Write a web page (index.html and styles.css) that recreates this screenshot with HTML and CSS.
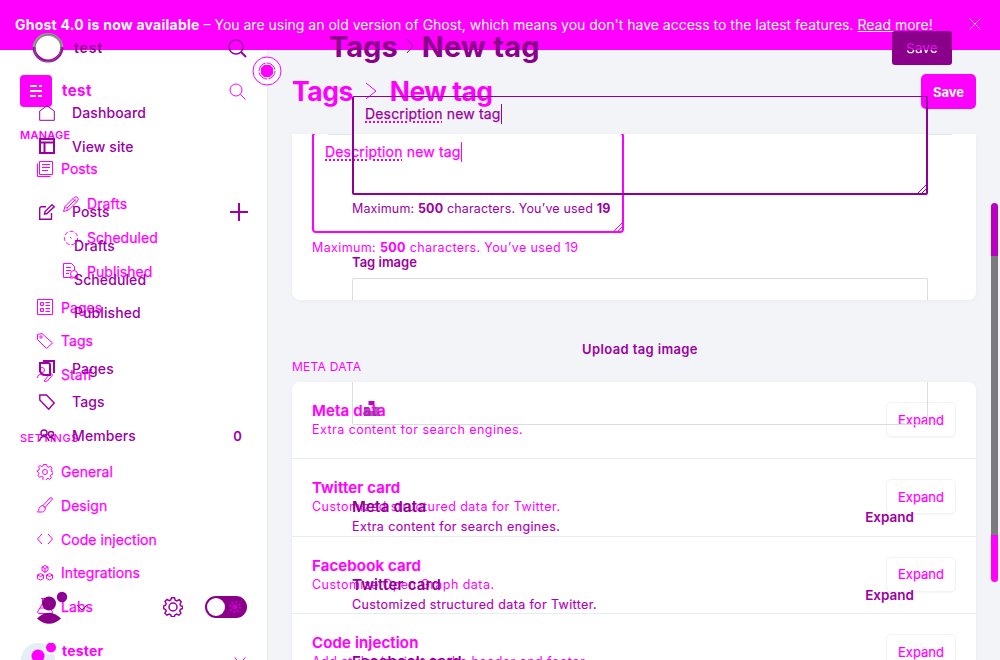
FILE: index.html
```html
<!DOCTYPE html>
<html lang="en">
<head>
<meta charset="utf-8">
<title>New tag</title>
<link rel="stylesheet" href="styles.css">
</head>
<body>
<div class="screen">
<header class="banner"><p><b>Ghost 4.0 is now available</b> <span>– You are using an old version of Ghost, which means you don't have access to the latest features.</span> <a>Read more!</a></p>
<svg width="12" height="12" viewBox="0 0 12 12"><path d="M.5.5l11 11M11.5.5l-11 11" stroke="#fff" stroke-dasharray="2 1"/></svg></header>

<div class="layer current">
<nav class="side">
  <div class="brand"><svg class="logo" width="32" height="32" viewBox="0 0 32 32"><rect width="32" height="32" rx="4" fill="#f0f"/><path d="M10 11h7M19 11h3M10 16h12M10 21h6M18 21h4" stroke="#fff" stroke-width="2"/></svg><b>test</b>
  <svg class="i search" width="17" height="17" viewBox="0 0 17 17"><circle cx="7" cy="7" r="6"/><path d="M11.5 11.5l5 5"/></svg></div>
  <h4 class="manage">MANAGE</h4>
  <ul>
    <li><svg class="i" width="16" height="16" viewBox="0 0 16 16"><path d="M2.5.5h13v13h-13zM.5 2.500v13h13M5 3.500h8M5 6.500h8M5 9.500h6"/></svg>Posts</li>
  </ul>
  <ul class="sub">
    <li><svg class="i" width="16" height="16" viewBox="0 0 16 16"><path d="M.5 15.500l1.500-5 9-9q2-1.500 3.500 0t0 3.500l-9 9zM2 10.500l3.500 3.500M4 12l8.500-8.500M10 2.500l3.500 3.500"/></svg>Drafts</li>
    <li><svg class="i" width="16" height="16" viewBox="0 0 16 16"><circle cx="8" cy="8" r="6.700" stroke-dasharray="4 2"/><path d="M7 7l1.500 1.500"/></svg>Scheduled</li>
    <li><svg class="i" width="16" height="16" viewBox="0 0 16 16"><path d="M7 14.500H.5V.5h8l3 3V7M3 4.500h5M3 7.500h5M3 10.500h3"/><circle cx="11" cy="11" r="3.500"/><path d="M8 13l-1 2h3M14 13l1 2h-4"/></svg>Published</li>
  </ul>
  <ul class="group">
    <li><svg class="i" width="16" height="16" viewBox="0 0 16 16"><path d="M.5.5h15v15H.5zM3.500 3.500h3v3h-3zM3.500 9.500h3v3h-3zM8.500 3.500H13M8.500 6.500H13M8.500 9.500H13M8.500 12.500H13"/></svg>Pages</li>
    <li><svg class="i" width="16" height="16" viewBox="0 0 16 16"><path d="M.5 1.500L5 .5l10.500 9.500-6 5.500L.5 6.500z"/><circle cx="4" cy="4" r="1.200"/></svg>Tags</li>
    <li><svg class="i" width="16" height="16" viewBox="0 0 16 16"><circle cx="5" cy="4" r="2.500"/><path d="M.5 12q0-4 5-4 3 0 3.500 2M7 15l6-7q2-1 2.500 1l-5 6-3 .5z"/></svg>Staff</li>
  </ul>
  <h4 class="settings">SETTINGS</h4>
  <ul>
    <li><svg class="i" width="16" height="16" viewBox="0 0 16 16"><path d="M6.500.5h3l.5 2 1.500.700 2-1 1.500 2-1 1.800.500 1.500 1.500.500v2l-2 .500-.500 1.500 1 1.800-2 1.500-1.500-1-1.500.700-.5 1.500h-3L6 13l-1.500-.700-2 1-1.500-2 1-1.800L1.500 8.500.5 8V6.500l1.500-.500L2.500 4.500l-1-1.800 1.500-1.200 1.500 1L6 2z"/><circle cx="8" cy="8" r="2.500"/></svg>General</li>
    <li><svg class="i" width="16" height="16" viewBox="0 0 16 16"><path d="M6 8.500L13 1q2-1 2.500 1L8 10.500zM6 8.500l2.500 2.500q0 3-3 4H.5q1.500-1 1.500-3.500 1-3 4-3z"/></svg>Design</li>
    <li><svg class="i" width="16" height="16" viewBox="0 0 16 16"><path d="M5 3L.5 8 5 13M11 3l4.500 5L11 13"/></svg>Code injection</li>
    <li><svg class="i" width="16" height="16" viewBox="0 0 16 16"><path d="M8 .5l3 1.500v3.500L8 7 5 5.500V2zM3.500 8.500l3 1.500v3.500l-3 1.500-3-1.500V10zM12.500 8.500l3 1.500v3.500l-3 1.500-3-1.500V10zM5 2l3 1.500L11 2M.5 10l3 1.500 3-1.500M9.500 10l3 1.500 3-1.500M8 3.500V8"/></svg>Integrations</li>
    <li><svg class="i" width="16" height="16" viewBox="0 0 16 16"><path d="M4 .5h7M5.500.5v5L.5 14l1 1.500h13l1-1.500-5-8.500v-5M3 10h10"/></svg>Labs</li>
  </ul>
  <div class="user"><svg width="38" height="38" viewBox="0 0 38 38"><circle cx="17" cy="17" r="17" fill="#e5eef5"/><circle cx="17" cy="13" r="6.500" fill="#f0f"/><circle cx="30" cy="4.500" r="7" fill="#fff"/><circle cx="30" cy="4.500" r="5" fill="#f0f"/></svg><b>tester</b><svg class="i chev" width="12" height="7" viewBox="0 0 12 7"><path d="M.5.5L6 6 11.500.5"/></svg></div>
</nav>
<main class="main">
  <div class="head"><h1>Tags <svg class="i" width="12" height="18" viewBox="0 0 12 18"><path d="M1 1l10 8-10 8"/></svg> <span>New tag</span></h1><button class="save">Save</button></div>
  <section class="card form"><div class="area"><span class="typed"><u>Description</u> new tag</span><svg class="i grip" width="9" height="9" viewBox="0 0 9 9"><path d="M1 9l8-8M5 9l4-4"/></svg></div><p class="count">Maximum: <b>500</b> characters. You’ve used 19</p></section>
  <h4 class="meta">META DATA</h4>
  <section class="card list">
    <div class="row"><div><h3>Meta data</h3><p>Extra content for search engines.</p></div><button>Expand</button></div>
    <div class="row"><div><h3>Twitter card</h3><p>Customized structured data for Twitter.</p></div><button>Expand</button></div>
    <div class="row"><div><h3>Facebook card</h3><p>Customize Open Graph data.</p></div><button>Expand</button></div>
    <div class="row"><div><h3>Code injection</h3><p>Add styles/scripts to the header and footer.</p></div><button>Expand</button></div>
  </section>
</main>
</div>

<div class="layer previous">
<nav class="side">
  <div class="brand"><svg class="ring" width="32" height="32" viewBox="0 0 32 32" fill="none"><circle cx="16" cy="16" r="13" fill="#fff"/><path d="M2 17A14 14 0 0 1 30 16" stroke="#999" stroke-width="3"/><path d="M2 15A14 14 0 0 0 30 15" stroke="#a000a8" stroke-width="3"/><ellipse cx="16" cy="16" rx="13" ry="14" stroke="#777" stroke-width=".8" transform="rotate(35 16 16)"/></svg><b>test</b>
  <svg class="i search" width="19" height="19" viewBox="0 0 19 19"><circle cx="8" cy="8" r="7" stroke-width="1.500"/><path d="M13 13l5 5" stroke-width="2"/></svg></div>
  <ul class="top">
    <li><svg class="i" width="16" height="16" viewBox="0 0 16 16"><path d="M.7 15.300V6L8 .8 15.300 6v9.300z"/></svg>Dashboard</li>
    <li><svg class="i bold" width="16" height="16" viewBox="0 0 16 16"><path d="M1 1h14v14H1zM1 4.500h14M5.500 4.500V15"/></svg>View site</li>
  </ul>
  <ul class="posts">
    <li><svg class="i" width="16" height="16" viewBox="0 0 16 16"><path d="M7 2.700H2.500q-1.800 0-1.800 1.800v10.800h11.800V9M5.500 10l.5-2.500L13 .8l2.200 2L8 9.500z"/></svg>Posts<svg class="i plus" width="18" height="18" viewBox="0 0 18 18"><path d="M9 0v18M0 9h18"/></svg></li>
    <li class="in">Drafts</li><li class="in">Scheduled</li><li class="in">Published</li>
  </ul>
  <ul class="pages">
    <li><svg class="i bold" width="16" height="16" viewBox="0 0 16 16"><path d="M4 1h11v12M1 3h8q2 0 2 2v10H6q-4 0-5-4z"/></svg>Pages</li>
    <li><svg class="i" width="16" height="16" viewBox="0 0 16 16"><path d="M.8 1h6.700l7.700 8-5.500 6.200L.8 6z"/></svg>Tags</li>
    <li><svg class="i" width="16" height="16" viewBox="0 0 16 16"><circle cx="5" cy="5" r="3"/><circle cx="12" cy="6" r="2.500"/><path d="M.5 13q1-4.500 4.500-4.500T10 13M10 9.500q4-1 5.500 3.500"/></svg>Members<b class="zero">0</b></li>
  </ul>
  <div class="foot">
    <svg class="avatar" width="31" height="34" viewBox="0 0 31 34"><circle cx="12" cy="13.500" r="7" fill="#8b008b"/><path d="M0 28.500Q12 17 24 28.500 12 39 0 28.500z" fill="#8b008b"/><circle cx="25" cy="7" r="5.200" fill="#8f0098"/></svg>
    <svg class="i drop" width="12" height="7" viewBox="0 0 12 7"><path d="M1 1l5 5 5-5"/></svg>
    <svg class="i gear" width="20" height="20" viewBox="0 0 20 20"><path d="M8.500.8h3l.7 2.500 1.500.6 2.500-1.200 2 2-1.200 2.500.6 1.500 2 .8v2l-2.200.9-.6 1.500 1.100 2.300-2 2-2.300-1.200-1.500.7-.8 2h-2.800l-.8-2-1.500-.7-2.300 1.200-2-2L3.200 14l-.6-1.500-2-.8V9l2-.8.600-1.500L2 4.500l2-2 2.300 1.200 1.500-.7z"/><circle cx="10" cy="10" r="4"/></svg>
    <svg class="toggle" width="42" height="22" viewBox="0 0 42 22"><rect width="42" height="22" rx="11" fill="#8b008b"/><circle cx="11" cy="11" r="9" fill="#fff"/><g fill="none" stroke="#d000d8"><circle cx="30" cy="11" r="2" fill="#d000d8"/><circle cx="30" cy="11" r="5" stroke-width="2" stroke-dasharray="1.500 2.400"/></g></svg>
  </div>
</nav>
<main class="main">
  <div class="head"><h1>Tags <svg class="i" width="8" height="16" viewBox="0 0 8 16"><path d="M1 1l6 7-6 7"/></svg> <span>New tag</span></h1><button class="save"><span>Save</span></button></div>
  <div class="area"><span class="typed"><u>Description</u> new tag</span><svg class="i grip" width="9" height="9" viewBox="0 0 9 9"><path d="M1 9l8-8M5 9l4-4"/></svg></div>
  <p class="count">Maximum: <b>500</b> characters. You’ve used <b>19</b></p>
  <h5>Tag image</h5>
  <div class="boxtop"></div>
  <div class="upload">Upload tag image</div>
  <div class="boxend"><svg width="15" height="15" viewBox="0 0 15 15"><path d="M4.500 0h6v4h-6z" fill="#c000c8"/><path d="M0 6h4.500v4h6V6H15v9H0z" fill="#a020a8" opacity=".75"/></svg></div>
  <div class="row first"><div><h3>Meta data</h3><p>Extra content for search engines.</p></div><b>Expand</b></div>
  <div class="row"><div><h3>Twitter card</h3><p>Customized structured data for Twitter.</p></div><b>Expand</b></div>
  <div class="row"><div><h3>Facebook card</h3></div></div>
</main>
</div>
<svg class="marker" width="30" height="30" viewBox="0 0 30 30"><g fill="#fff" stroke="#f0f"><circle cx="15" cy="15" r="14"/><circle cx="15" cy="15" r="8" stroke-dasharray="11 1.500"/></g><path d="M12 9h6l3 3v6l-3 3h-6l-3-3v-6z" fill="#f0f"/></svg>
<div class="scroll"><i></i><i></i><i></i></div>
</div>
</body>
</html>
```
FILE: styles.css
```css
* { box-sizing: border-box; margin: 0; padding: 0; }
body { font-family: Inter, "Liberation Sans", sans-serif; }
.screen { position: relative; width: 1000px; height: 660px; overflow: hidden; background: #f3f4f8; }
ul { list-style: none; }
svg { display: block; flex: none; }
.i { fill: none; stroke: currentColor; }
button { font-family: inherit; border: 0; }

.banner { position: absolute; z-index: 1; inset: 0 0 auto; height: 50px; padding: 0 19px 2px 15px; display: flex; justify-content: space-between; align-items: center; background: #f0f; color: #fff; font-size: 14px; white-space: nowrap; }
.banner b { letter-spacing: .24px; }
.banner a { text-decoration: underline; }

.layer { position: absolute; inset: 0; display: flex; overflow: hidden; }
.previous { z-index: 2; }
.side { width: 268px; flex: none; }
.side li { display: flex; align-items: center; height: 33.6px; font-size: 14px; font-weight: 500; letter-spacing: .05px; }
.main { flex: none; width: 732px; }

.current { color: #f0f; }
.current .side { background: #fff; border-right: 1px solid #e8ecf2; padding: 75px 20px 0; }
.current .brand { display: flex; align-items: center; height: 32px; gap: 10px; font-size: 15px; }
.current .brand b { letter-spacing: .4px; margin-top: -2px; }
.current .search { margin-left: auto; margin-right: 1px; }
.current .side h4 { height: 20px; line-height: 20px; font-size: 11px; letter-spacing: .25px; }
.current .manage { margin-top: 18px; font-weight: 600; }
.current .settings { margin-top: 37px; font-weight: 500; }
.current .side h4.settings { letter-spacing: .5px; }
.current .side h4 + ul { margin-top: 7px; }
.current .side li { padding-left: 17px; gap: 8px; font-weight: 400; -webkit-text-stroke: .25px currentColor; }
.current .sub { padding-left: 26px; margin-top: 1.600px; }
.current .group { margin-top: 2.300px; }
.current .user { display: flex; margin: 19.800px 0 0 1px; }
.current .user b { font-size: 14px; line-height: 16px; margin-left: 3px; letter-spacing: .2px; }
.current .chev { margin: 14px 1px 0 auto; }

.current .main { padding: 73px 24px 0; }
.head { display: flex; justify-content: space-between; }
.head h1 { display: flex; align-items: center; }
.current .head { height: 61px; }
.current h1 { height: 35px; font-size: 27px; font-weight: 700; letter-spacing: -.5px; }
.current h1 { font-size: 26.500px; }
.current h1 svg { margin: 0 13px 0 12px; }
.current .save { width: 55px; height: 35px; margin-top: 1px; border-radius: 5px; background: #f0f; color: #fff; font-size: 13px; font-weight: 700; }
.card { background: #fff; border-radius: 8px; box-shadow: 0 1px 4px #d9dde655; }
.form { position: relative; height: 166px; border-radius: 0 0 8px 8px; padding: 0 20px; overflow: hidden; }
.form::before, .form::after { content: ""; position: absolute; top: 0; width: 24px; height: 1px; background: #dce9f2; }
.form::before { left: 36px; }
.form::after { right: 24px; }
.area { position: relative; }
.current .area { width: 312px; height: 101px; margin-top: -2px; border: 2px solid #f0f; border-radius: 4px; padding: 7px 11px; }
.typed { display: inline-block; font-size: 14px; line-height: 20px; letter-spacing: .17px; border-right: 1px solid currentColor; -webkit-text-stroke: .25px currentColor; }
.typed u { text-decoration: underline dotted 2px #f000b0; text-underline-offset: 2px; }
.grip { position: absolute; right: 0; bottom: 0; }
.count { font-size: 12.500px; line-height: 18px; white-space: nowrap; }
.current .count { margin-top: 6px; letter-spacing: .37px; }
.current .meta { margin-top: 57px; height: 25px; line-height: 20px; font-size: 12px; font-weight: 400; letter-spacing: .25px; }
.list { height: 300px; }
.row { display: flex; justify-content: space-between; white-space: nowrap; height: 77.500px; }
.current .row { padding: 20px; border-bottom: 1px solid #e6edf3; }
.current .row:first-child { height: 77px; }
.row h3 { font-size: 15px; line-height: 19px; font-weight: 600; letter-spacing: .15px; }
.current .row h3 { margin-top: -1px; -webkit-text-stroke: .2px currentColor; }
.previous .row h3 { letter-spacing: .2px; color: #8f0096; }
.row p { font-size: 12.500px; line-height: 19px; letter-spacing: .46px; }
.previous .row p { letter-spacing: .37px; line-height: 21px; color: #b000ba; -webkit-text-stroke: .15px currentColor; }
.current .row button { width: 70px; height: 35px; border: 1px solid #f1f4f6; border-radius: 5px; background: #fff; box-shadow: 0 1px 2px #0000000a; color: #f0f; font-size: 13px; -webkit-text-stroke: .2px currentColor; }

.previous { color: #9b00a3; }
.previous .side { padding: 31px 20px 0 32px; }
.previous .brand { display: flex; height: 34px; align-items: center; gap: 10px; font-size: 14px; }
.previous .brand b { font-weight: 600; color: #8b008b; letter-spacing: .8px; margin-top: -2px; }
.previous .search { margin-left: auto; margin-right: 1px; }
.previous .side li { padding-left: 7px; gap: 17px; letter-spacing: .1px; }
.previous .top { margin-top: 31px; }
.previous .posts { margin-top: 32px; }
.previous .pages { margin-top: 22px; }
.previous .side li.in { padding-left: 42px; }
.previous .pages .i, .previous .posts .i { stroke-width: 1.400; }
.side .i.bold { stroke-width: 2; }
.side .i.plus { margin-left: auto; stroke-width: 2; }
.zero { margin-left: auto; margin-right: 6px; font-size: 13px; font-weight: 600; }
.previous .foot { display: flex; align-items: center; height: 34px; margin: 138px 0 0 5px; }
.drop { margin-left: 8px; }
.gear { margin-left: 75px; stroke-width: 1.500; }
.toggle { margin-left: 22px; }

.previous .main { padding: 28px 48px 0 84px; }
.previous .head { height: 68px; }
.previous h1 { height: 36px; font-size: 29px; font-weight: 700; color: #8b008b; margin-left: -23px; }
.previous h1 svg { margin: 0 8px; }
.previous h1 span { letter-spacing: .25px; }
.previous .save { width: 60px; height: 34px; margin-top: 3px; border-radius: 3px; background: #8b008b; font-size: 13.500px; font-weight: 500; }
.previous .save span { background: linear-gradient(#e010e8 65%, #fff 65%); background-clip: text; color: transparent; }
.previous .area { width: 576px; height: 99px; border: 2px solid #8f0098; border-top-width: 1px; border-radius: 2px; padding: 6px 11px; }
.previous .count { margin-top: 5px; letter-spacing: .15px; }
.previous h5 { margin-top: 34px; height: 26px; font-size: 13px; line-height: 20px; font-weight: 600; }
.boxtop, .boxend { width: 576px; border: 1px solid #dcdcdf; }
.boxtop { height: 22px; border-bottom: 0; border-radius: 2px 2px 0 0; }
.upload { width: 576px; height: 82px; padding-top: 39px; line-height: 20px; text-align: center; font-size: 13px; font-weight: 600; letter-spacing: .37px; }
.boxend { height: 43px; border-top: 0; border-radius: 0 0 2px 2px; padding: 19px 0 0 11px; }
.previous .row { width: 562px; }
.previous .row > b { font-size: 13.500px; font-weight: 600; line-height: 20px; margin-top: 10px; }
.previous .first { margin-top: 72px; }

.marker { position: absolute; z-index: 3; left: 252px; top: 56px; }
.scroll { position: absolute; z-index: 3; left: 991px; top: 203px; width: 7px; height: 379px; display: grid; grid-template-rows: 53px 279px 47px; border-radius: 4px; overflow: hidden; }
.scroll i { background: #b900c0; }
.scroll i:nth-child(2) { background: #7b7b7d; }
.scroll i:nth-child(3) { background: #f0f; }
```
